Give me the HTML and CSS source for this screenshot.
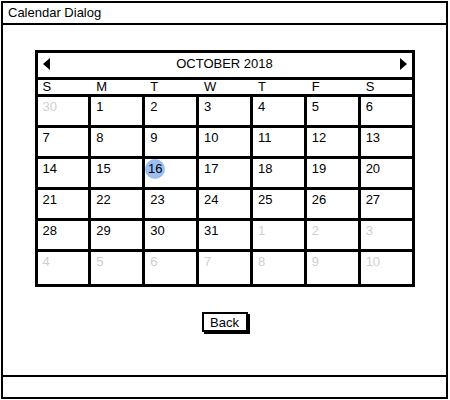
FILE: index.html
```html
<!DOCTYPE html>
<html>
<head>
<meta charset="utf-8">
<link rel="stylesheet" href="styles.css">
</head>
<body>
<div class="window">
  <div class="titlebar">Calendar Dialog</div>
  <div class="content">
    <div class="calendar">
      <div class="cal-head">
        <span class="arrow left"></span>
        <span class="month">OCTOBER 2018</span>
        <span class="arrow right"></span>
      </div>
      <div class="dow">
        <span>S</span><span>M</span><span>T</span><span>W</span><span>T</span><span>F</span><span>S</span>
      </div>
      <div class="grid">
        <div class="cell muted">30</div><div class="cell">1</div><div class="cell">2</div><div class="cell">3</div><div class="cell">4</div><div class="cell">5</div><div class="cell">6</div>
        <div class="cell">7</div><div class="cell">8</div><div class="cell">9</div><div class="cell">10</div><div class="cell">11</div><div class="cell">12</div><div class="cell">13</div>
        <div class="cell">14</div><div class="cell">15</div><div class="cell"><span class="sel">16</span></div><div class="cell">17</div><div class="cell">18</div><div class="cell">19</div><div class="cell">20</div>
        <div class="cell">21</div><div class="cell">22</div><div class="cell">23</div><div class="cell">24</div><div class="cell">25</div><div class="cell">26</div><div class="cell">27</div>
        <div class="cell">28</div><div class="cell">29</div><div class="cell">30</div><div class="cell">31</div><div class="cell muted">1</div><div class="cell muted">2</div><div class="cell muted">3</div>
        <div class="cell muted">4</div><div class="cell muted">5</div><div class="cell muted">6</div><div class="cell muted">7</div><div class="cell muted">8</div><div class="cell muted">9</div><div class="cell muted">10</div>
      </div>
    </div>
    <button class="btn">Back</button>
  </div>
  <div class="footer"></div>
</div>
</body>
</html>
```
FILE: styles.css
```css
html, body {
  margin: 0;
  padding: 0;
  background: #fff;
}
body {
  font-family: "Liberation Sans", Arial, sans-serif;
  font-size: 13px;
  color: #000;
}
.window {
  box-sizing: border-box;
  margin: 1px;
  width: 447px;
  height: 398px;
  border: 2px solid #000;
  display: flex;
  flex-direction: column;
}
.titlebar {
  height: 20px;
  line-height: 20px;
  padding-left: 5px;
  border-bottom: 2px solid #000;
  flex: none;
}
.content {
  flex: 1;
  display: flex;
  flex-direction: column;
  align-items: center;
  padding-top: 25px;
}
.calendar {
  box-sizing: border-box;
  width: 380px;
  border: 3px solid #000;
}
.cal-head {
  box-sizing: border-box;
  height: 27px;
  border-bottom: 3px solid #000;
  display: flex;
  align-items: center;
  justify-content: space-between;
  padding: 0 5px 3px;
}
.month {
  font-size: 13px;
}
.arrow {
  width: 0;
  height: 0;
  border-top: 6px solid transparent;
  border-bottom: 6px solid transparent;
}
.arrow.left {
  border-right: 7px solid #000;
}
.arrow.right {
  border-left: 7px solid #000;
}
.dow {
  height: 14px;
  display: grid;
  grid-template-columns: repeat(7, 1fr);
  column-gap: 3px;
  line-height: 14px;
}
.dow span {
  padding-left: 5px;
}
.grid {
  display: grid;
  grid-template-columns: repeat(7, 1fr);
  grid-template-rows: 28px 28px 28px 28px 28px 32px;
  gap: 3px;
  padding-top: 3px;
  background: #000;
}
.cell {
  background: #fff;
  padding: 2px 0 0 5px;
  line-height: 15px;
}
.cell.muted {
  color: #cfcfcf;
}
.sel {
  display: inline-block;
  width: 20px;
  height: 20px;
  line-height: 20px;
  text-align: center;
  border-radius: 50%;
  background: #9dbff0;
  margin: -2px 0 0 -5px;
}
.btn {
  margin-top: 25px;
  box-sizing: border-box;
  width: 46px;
  height: 20px;
  padding: 0;
  font-family: "Liberation Sans", Arial, sans-serif;
  font-size: 13px;
  color: #000;
  background: #fff;
  border: 2px solid #000;
  box-shadow: 2px 2px 0 #000;
  border-radius: 0;
}
.footer {
  flex: none;
  height: 20px;
  border-top: 2px solid #000;
}
```
